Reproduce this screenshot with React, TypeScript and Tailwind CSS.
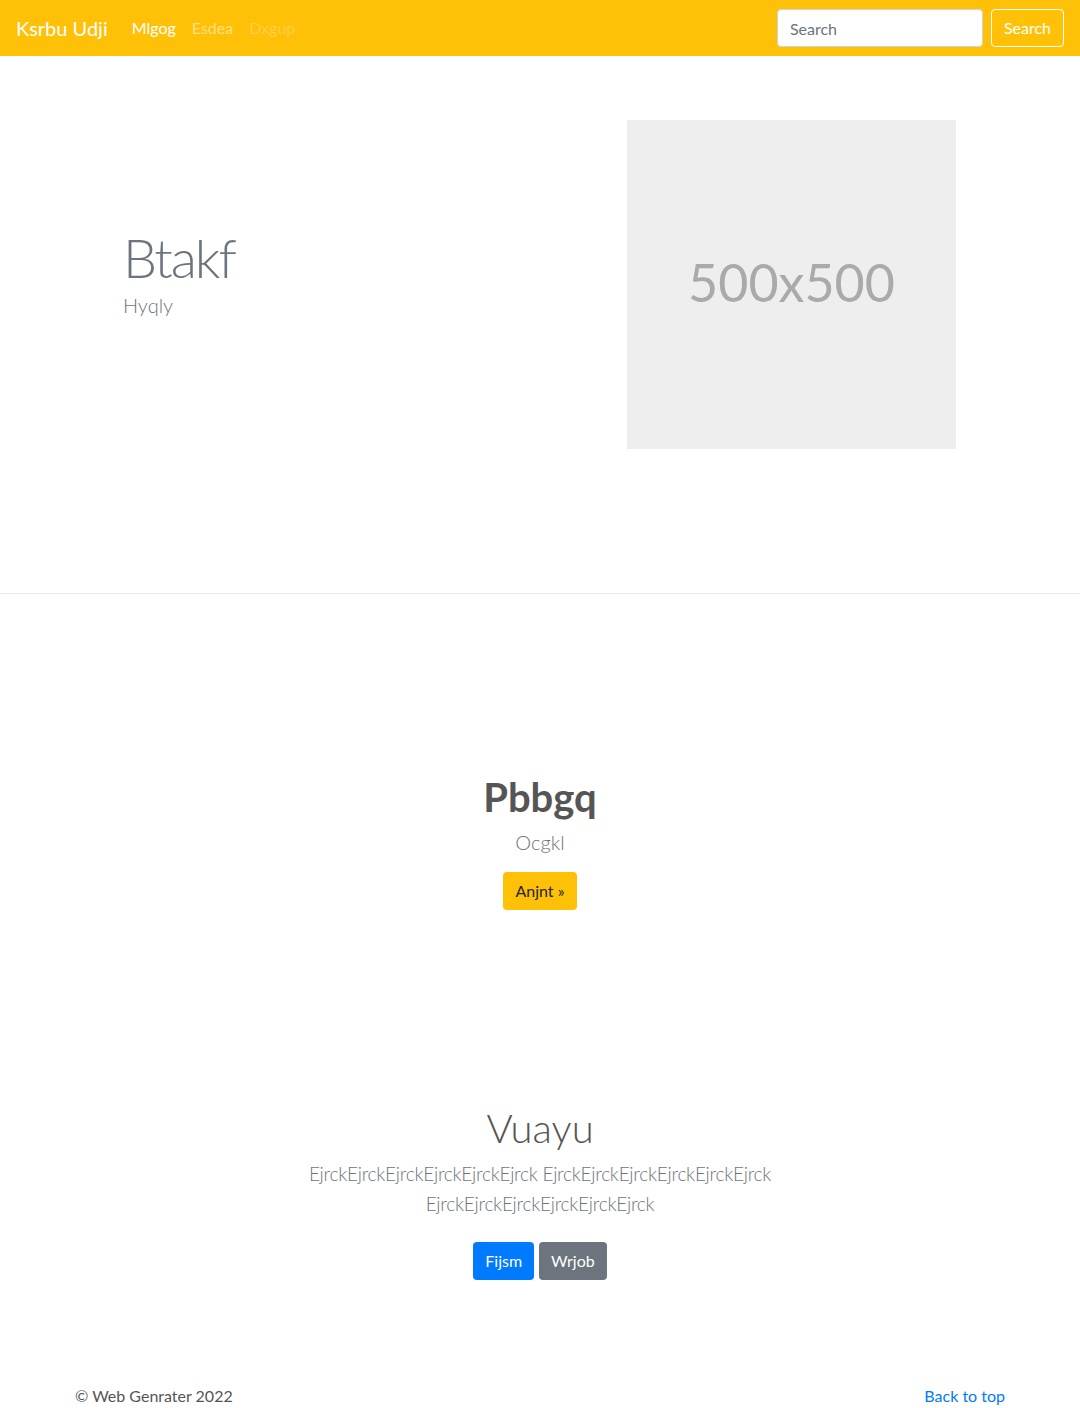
import React from 'react'

const font = { fontFamily: 'Lato, "Open Sans", sans-serif' }

function Navbar() {
  return (
    <nav className="h-14 bg-[#ffc107] flex items-center px-4">
      <a className="text-[20px] leading-[30px] text-white mr-4">Ksrbu Udji</a>
      <div className="flex items-center text-[16px] leading-6">
        <a className="px-2 text-white">Mlgog</a>
        <a className="px-2 text-white/50">Esdea</a>
        <a className="px-2 text-white/25">Dxgup</a>
      </div>
      <div className="ml-auto flex items-center">
        <input
          placeholder="Search"
          className="w-[206px] h-[38px] px-3 mr-2 rounded bg-white border border-[#ced4da] text-[16px] text-[#495057] placeholder:text-[#6c757d] outline-none"
        />
        <button className="h-[38px] px-3 rounded border border-white text-white text-[16px]">Search</button>
      </div>
    </nav>
  )
}

export default function App() {
  return (
    <div className="bg-white text-[#212529]" style={font}>
      <Navbar />

      {/* hero */}
      <section className="h-[538px] border-b border-[#e5e7ea] flex">
        <div className="pl-[123px] pt-[170px]">
          <h1 className="text-[54px] leading-[1.2] tracking-[-2px] font-light text-[#6c757d] -mb-[1px]">Btakf</h1>
          <p className="text-[20px] leading-[30px] font-light text-[#6c757d]">Hyqly</p>
        </div>
        <div className="ml-auto mr-[124px] mt-16 w-[329px] h-[329px] bg-[#eeeeee] flex items-center justify-center">
          <span className="text-[52px] leading-none text-[#aaaaaa] -mt-[6px]">500x500</span>
        </div>
      </section>

      {/* callout */}
      <section className="pt-[179px] flex flex-col items-center text-center">
        <h1 className="text-[40px] leading-[1.2] font-bold text-[#555555] mb-[6px]">Pbbgq</h1>
        <p className="text-[20px] leading-[30px] font-light text-[#6c757d] mb-[15px]">Ocgkl</p>
        <button className="h-[38px] px-3 rounded bg-[#ffc107] text-[#212529] text-[16px]">Anjnt »</button>
      </section>

      {/* intro */}
      <section className="pt-[194px] flex flex-col items-center text-center">
        <h1 className="text-[40px] leading-[1.2] font-light text-[#555555] mb-[7px]">Vuayu</h1>
        <p className="max-w-[540px] text-[19px] leading-[30px] tracking-[-0.25px] font-light text-[#6c757d] mb-[23px]">
          EjrckEjrckEjrckEjrckEjrckEjrck EjrckEjrckEjrckEjrckEjrckEjrck EjrckEjrckEjrckEjrckEjrckEjrck
        </p>
        <div className="flex gap-[5px]">
          <button className="h-[38px] px-3 rounded bg-[#007bff] text-white text-[16px]">Fijsm</button>
          <button className="h-[38px] px-3 rounded bg-[#6c757d] text-white text-[16px]">Wrjob</button>
        </div>
      </section>

      <footer className="pt-[104px] pb-12 px-[75px] flex justify-between text-[16px] leading-6">
        <p className="text-[#555555]">© Web Genrater 2022</p>
        <a className="text-[#007bff]">Back to top</a>
      </footer>
    </div>
  )
}
